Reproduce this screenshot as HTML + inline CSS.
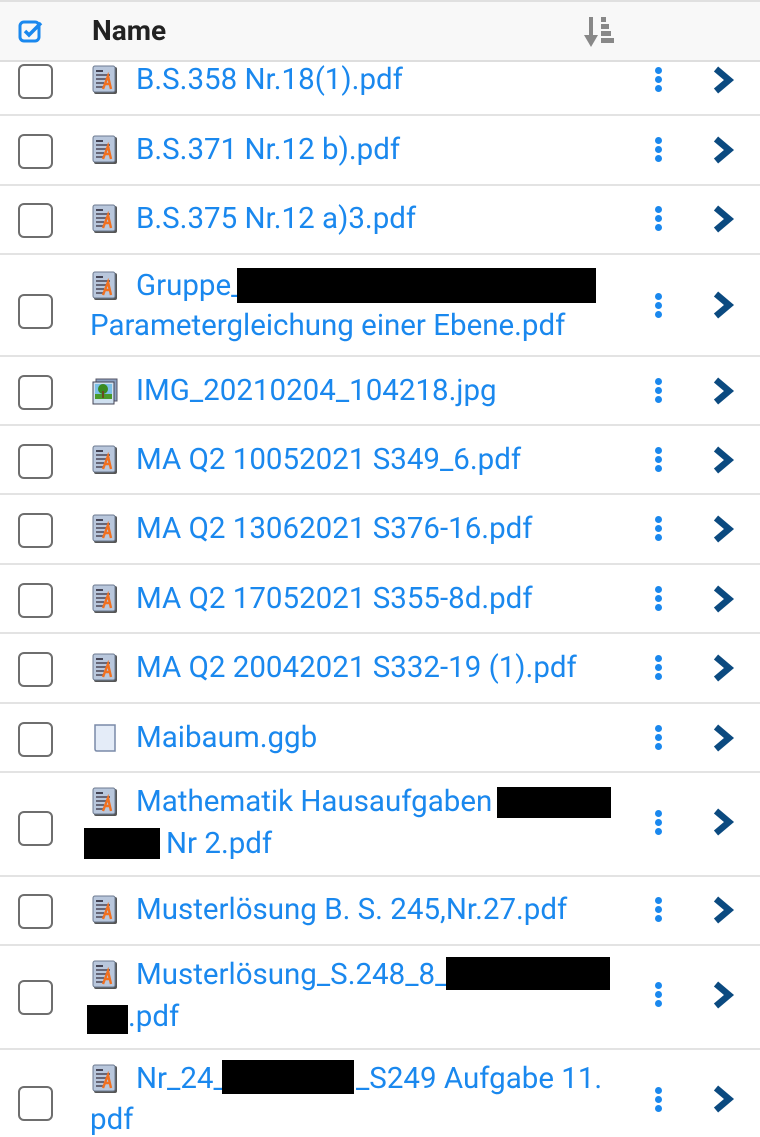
<!DOCTYPE html>
<html><head><meta charset="utf-8"><style>
body{margin:0;width:760px;height:1134px;overflow:hidden;background:#fff;font-family:"Roboto","Liberation Sans",sans-serif;position:relative}
.a{position:absolute}
.sep{position:absolute;left:0;width:760px;height:2px;background:#e3e3e3}
.cb{position:absolute;left:18px;width:31px;height:31px;border:2px solid #6e6e6e;border-radius:6px;box-sizing:content-box}
.t{position:absolute;font-size:29.5px;line-height:30px;color:#1a88ee;white-space:nowrap}
.ic{position:absolute;left:92px;width:26px;height:30px}
.dots{position:absolute;left:655px;width:7px}
.dots i{display:block;width:7px;height:7px;border-radius:50%;background:#1a88ee;margin-bottom:2px}
.ch{position:absolute;left:710px;width:26px;height:28px}
.bk{position:absolute;background:#000}
</style></head><body>
<svg width="0" height="0" style="position:absolute"><defs>
<symbol id="pdf" viewBox="0 0 26 30"><rect x="2" y="2" width="23" height="27" rx="2" fill="#555"/><rect x="1" y="1" width="22" height="26" rx="2" fill="#b9c7dc" stroke="#6c7a90"/><rect x="4" y="5" width="7" height="2" fill="#445"/><rect x="4" y="9" width="14" height="2" fill="#667"/><rect x="4" y="13" width="10" height="2" fill="#667"/><rect x="4" y="17" width="8" height="2" fill="#667"/><rect x="4" y="21" width="8" height="2" fill="#667"/><path d="M11 24 L16 11 L19 24 M13 19 H18" stroke="#f07020" stroke-width="2.4" fill="none"/></symbol>
<symbol id="img" viewBox="0 0 26 30"><rect x="4" y="3" width="21" height="22" fill="#8aa0c0" stroke="#556"/><rect x="1" y="6" width="21" height="22" fill="#cfe0f0" stroke="#445"/><rect x="3" y="8" width="17" height="12" fill="#7cc0e8"/><rect x="3" y="18" width="17" height="5" fill="#4a9a2a"/><circle cx="11" cy="13" r="5" fill="#3a8a20"/><rect x="10" y="15" width="2" height="7" fill="#6a4a20"/></symbol>
<symbol id="doc" viewBox="0 0 26 30"><path d="M3 2 H23 V28 H5 Q3 28 3 26 Z" fill="#e4ecf8" stroke="#7a8aa8" stroke-width="1.5"/></symbol>
<symbol id="chev" viewBox="0 0 26 28"><path d="M6 3 L19 14 L6 25" stroke="#0b4a80" stroke-width="6.5" fill="none" stroke-linejoin="miter"/></symbol>
</defs></svg>

<div class="cb" style="top:64px"></div><svg class="ic" style="top:65px"><use href="#pdf"/></svg><div class="t" style="left:136px;top:65px">B.S.358 Nr.18(1).pdf</div><div class="dots" style="top:67px"><i></i><i></i><i></i></div><svg class="ch" style="top:66px"><use href="#chev"/></svg>
<div class="sep" style="top:114px"></div>
<div class="cb" style="top:134px"></div><svg class="ic" style="top:135px"><use href="#pdf"/></svg><div class="t" style="left:136px;top:135px">B.S.371 Nr.12 b).pdf</div><div class="dots" style="top:137px"><i></i><i></i><i></i></div><svg class="ch" style="top:136px"><use href="#chev"/></svg>
<div class="sep" style="top:184px"></div>
<div class="cb" style="top:203px"></div><svg class="ic" style="top:204px"><use href="#pdf"/></svg><div class="t" style="left:136px;top:204px">B.S.375 Nr.12 a)3.pdf</div><div class="dots" style="top:206px"><i></i><i></i><i></i></div><svg class="ch" style="top:205px"><use href="#chev"/></svg>
<div class="sep" style="top:253px"></div>
<div class="cb" style="top:294px"></div><svg class="ic" style="top:271px"><use href="#pdf"/></svg><div class="t" style="left:136px;top:271px">Gruppe_</div><div class="bk" style="left:237px;top:268px;width:359px;height:35px"></div><div class="t" style="left:90px;top:311px">Parametergleichung einer Ebene.pdf</div><div class="dots" style="top:293px"><i></i><i></i><i></i></div><svg class="ch" style="top:291px"><use href="#chev"/></svg>
<div class="sep" style="top:355px"></div>
<div class="cb" style="top:375px"></div><svg class="ic" style="top:376px"><use href="#img"/></svg><div class="t" style="left:136px;top:376px">IMG_20210204_104218.jpg</div><div class="dots" style="top:378px"><i></i><i></i><i></i></div><svg class="ch" style="top:377px"><use href="#chev"/></svg>
<div class="sep" style="top:424px"></div>
<div class="cb" style="top:444px"></div><svg class="ic" style="top:445px"><use href="#pdf"/></svg><div class="t" style="left:136px;top:445px">MA Q2 10052021 S349_6.pdf</div><div class="dots" style="top:447px"><i></i><i></i><i></i></div><svg class="ch" style="top:446px"><use href="#chev"/></svg>
<div class="sep" style="top:493px"></div>
<div class="cb" style="top:513px"></div><svg class="ic" style="top:514px"><use href="#pdf"/></svg><div class="t" style="left:136px;top:514px">MA Q2 13062021 S376-16.pdf</div><div class="dots" style="top:516px"><i></i><i></i><i></i></div><svg class="ch" style="top:515px"><use href="#chev"/></svg>
<div class="sep" style="top:563px"></div>
<div class="cb" style="top:583px"></div><svg class="ic" style="top:584px"><use href="#pdf"/></svg><div class="t" style="left:136px;top:584px">MA Q2 17052021 S355-8d.pdf</div><div class="dots" style="top:586px"><i></i><i></i><i></i></div><svg class="ch" style="top:585px"><use href="#chev"/></svg>
<div class="sep" style="top:632px"></div>
<div class="cb" style="top:652px"></div><svg class="ic" style="top:653px"><use href="#pdf"/></svg><div class="t" style="left:136px;top:653px">MA Q2 20042021 S332-19 (1).pdf</div><div class="dots" style="top:655px"><i></i><i></i><i></i></div><svg class="ch" style="top:654px"><use href="#chev"/></svg>
<div class="sep" style="top:702px"></div>
<div class="cb" style="top:722px"></div><svg class="ic" style="top:723px"><use href="#doc"/></svg><div class="t" style="left:136px;top:723px">Maibaum.ggb</div><div class="dots" style="top:725px"><i></i><i></i><i></i></div><svg class="ch" style="top:724px"><use href="#chev"/></svg>
<div class="sep" style="top:771px"></div>
<div class="cb" style="top:811px"></div><svg class="ic" style="top:787px"><use href="#pdf"/></svg><div class="t" style="left:136px;top:787px">Mathematik Hausaufgaben</div><div class="bk" style="left:497px;top:787px;width:114px;height:31px"></div><div class="bk" style="left:84px;top:828px;width:76px;height:31px"></div><div class="t" style="left:166px;top:829px">Nr 2.pdf</div><div class="dots" style="top:810px"><i></i><i></i><i></i></div><svg class="ch" style="top:808px"><use href="#chev"/></svg>
<div class="sep" style="top:875px"></div>
<div class="cb" style="top:894px"></div><svg class="ic" style="top:895px"><use href="#pdf"/></svg><div class="t" style="left:136px;top:895px">Musterlösung B. S. 245,Nr.27.pdf</div><div class="dots" style="top:897px"><i></i><i></i><i></i></div><svg class="ch" style="top:896px"><use href="#chev"/></svg>
<div class="sep" style="top:944px"></div>
<div class="cb" style="top:980px"></div><svg class="ic" style="top:960px"><use href="#pdf"/></svg><div class="t" style="left:136px;top:960px">Musterlösung_S.248_8_</div><div class="bk" style="left:446px;top:957px;width:164px;height:33px"></div><div class="bk" style="left:87px;top:1005px;width:41px;height:29px"></div><div class="t" style="left:128px;top:1002px">.pdf</div><div class="dots" style="top:982px"><i></i><i></i><i></i></div><svg class="ch" style="top:981px"><use href="#chev"/></svg>
<div class="sep" style="top:1048px"></div>
<div class="cb" style="top:1086px"></div><svg class="ic" style="top:1064px"><use href="#pdf"/></svg><div class="t" style="left:136px;top:1064px">Nr_24_</div><div class="bk" style="left:222px;top:1060px;width:132px;height:34px"></div><div class="t" style="left:356px;top:1064px">_S249 Aufgabe 11.</div><div class="t" style="left:90px;top:1105px">pdf</div><div class="dots" style="top:1087px"><i></i><i></i><i></i></div><svg class="ch" style="top:1085px"><use href="#chev"/></svg>

<div class="a" style="left:0;top:0;width:760px;height:62px;background:#f8f8f8;border-top:2px solid #e0e0e0;border-bottom:2px solid #dedede;box-sizing:border-box"></div>
<svg class="a" style="left:18px;top:20px" width="26" height="24" viewBox="0 0 26 24"><rect x="2" y="2" width="19" height="19" rx="4" fill="none" stroke="#1a88ee" stroke-width="3"/><path d="M7 11 L11 15 L23 3" stroke="#1a88ee" stroke-width="3.5" fill="none"/></svg>
<div class="a" style="left:92px;top:15px;font-size:28px;font-weight:bold;color:#222;line-height:32px">Name</div>
<svg class="a" style="left:584px;top:15px" width="32" height="34" viewBox="0 0 32 34"><rect x="5" y="2" width="4" height="20" fill="#888"/><path d="M0 20 H14 L7 32 Z" fill="#888"/><rect x="17" y="2" width="5" height="5" fill="#888"/><rect x="17" y="9" width="8" height="5" fill="#888"/><rect x="17" y="16" width="10" height="5" fill="#888"/><rect x="17" y="23" width="13" height="5" fill="#888"/></svg>
</body></html>
